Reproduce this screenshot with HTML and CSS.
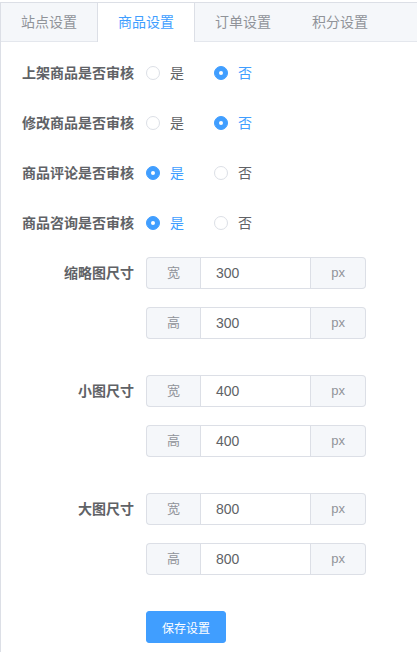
FILE: index.html
```html
<!DOCTYPE html>
<html lang="zh-CN">
<head>
<meta charset="utf-8">
<title>商品设置</title>
<link rel="stylesheet" href="styles.css">
</head>
<body>
<div class="card">
  <div class="tabs-header">
    <div class="tabs-nav">
      <div class="tab">站点设置</div>
      <div class="tab active">商品设置</div>
      <div class="tab">订单设置</div>
      <div class="tab">积分设置</div>
    </div>
  </div>
  <div class="tabs-content">
    <div class="form-item">
      <div class="label">上架商品是否审核</div>
      <div class="control">
        <span class="radio"><span class="dot"></span><span class="rtext">是</span></span>
        <span class="radio checked"><span class="dot"></span><span class="rtext">否</span></span>
      </div>
    </div>
    <div class="form-item">
      <div class="label">修改商品是否审核</div>
      <div class="control">
        <span class="radio"><span class="dot"></span><span class="rtext">是</span></span>
        <span class="radio checked"><span class="dot"></span><span class="rtext">否</span></span>
      </div>
    </div>
    <div class="form-item">
      <div class="label">商品评论是否审核</div>
      <div class="control">
        <span class="radio checked"><span class="dot"></span><span class="rtext">是</span></span>
        <span class="radio"><span class="dot"></span><span class="rtext">否</span></span>
      </div>
    </div>
    <div class="form-item">
      <div class="label">商品咨询是否审核</div>
      <div class="control">
        <span class="radio checked"><span class="dot"></span><span class="rtext">是</span></span>
        <span class="radio"><span class="dot"></span><span class="rtext">否</span></span>
      </div>
    </div>

    <div class="form-item">
      <div class="label">缩略图尺寸</div>
      <div class="control column">
        <div class="input-group"><span class="prepend">宽</span><span class="input">300</span><span class="append">px</span></div>
        <div class="input-group"><span class="prepend">高</span><span class="input">300</span><span class="append">px</span></div>
      </div>
    </div>
    <div class="form-item">
      <div class="label">小图尺寸</div>
      <div class="control column">
        <div class="input-group"><span class="prepend">宽</span><span class="input">400</span><span class="append">px</span></div>
        <div class="input-group"><span class="prepend">高</span><span class="input">400</span><span class="append">px</span></div>
      </div>
    </div>
    <div class="form-item">
      <div class="label">大图尺寸</div>
      <div class="control column">
        <div class="input-group"><span class="prepend">宽</span><span class="input">800</span><span class="append">px</span></div>
        <div class="input-group"><span class="prepend">高</span><span class="input">800</span><span class="append">px</span></div>
      </div>
    </div>
    <div class="form-item last">
      <div class="label"></div>
      <div class="control">
        <button class="btn" type="button">保存设置</button>
      </div>
    </div>
  </div>
</div>
</body>
</html>
```

FILE: styles.css
```css
html, body {
  margin: 0;
  padding: 0;
  background: #fff;
  overflow: hidden;
}
body {
  font-family: "Liberation Sans", "Noto Sans CJK SC", sans-serif;
  color: #606266;
  height: 652px;
}
.card {
  margin-top: 2px;
  width: 100%;
  height: 650px;
  box-sizing: border-box;
  border-top: 1px solid #dcdfe6;
  border-left: 1px solid #dcdfe6;
  background: #fff;
  overflow: hidden;
}
.tabs-header {
  height: 38px;
  background: #f5f7fa;
  border-bottom: 1px solid #e4e7ed;
}
.tabs-nav {
  display: flex;
  margin-bottom: -1px;
}
.tab {
  box-sizing: border-box;
  height: 39px;
  line-height: 39px;
  padding: 0 20px;
  margin-left: -1px;
  border-left: 1px solid transparent;
  border-right: 1px solid transparent;
  font-size: 14px;
  color: #909399;
}
.tab.active {
  background: #fff;
  color: #409eff;
  border-left-color: #dcdfe6;
  border-right-color: #dcdfe6;
}
.tabs-content {
  padding: 15px;
}
.form-item {
  display: flex;
  margin-bottom: 18px;
}
.form-item.last {
  margin-bottom: 0;
}
.label {
  width: 130px;
  flex: none;
  box-sizing: border-box;
  padding-right: 12px;
  text-align: right;
  line-height: 32px;
  font-size: 14px;
  font-weight: bold;
  color: #606266;
}
.control {
  display: flex;
  align-items: center;
  line-height: 32px;
  min-height: 32px;
}
.control.column {
  flex-direction: column;
  align-items: flex-start;
}
.radio {
  display: inline-flex;
  align-items: center;
  margin-right: 30px;
  font-size: 14px;
  color: #606266;
}
.dot {
  box-sizing: border-box;
  width: 14px;
  height: 14px;
  border-radius: 50%;
  border: 1px solid #dcdfe6;
  background: #fff;
  position: relative;
}
.radio.checked .dot {
  border-color: #409eff;
  background: #409eff;
}
.radio.checked .dot::after {
  content: "";
  position: absolute;
  width: 4px;
  height: 4px;
  border-radius: 50%;
  background: #fff;
  left: 50%;
  top: 50%;
  transform: translate(-50%, -50%);
}
.rtext {
  padding-left: 10px;
}
.radio.checked .rtext {
  color: #409eff;
}
.input-group {
  display: flex;
  width: 220px;
  height: 32px;
  margin-bottom: 18px;
  font-size: 13px;
}
.prepend, .append {
  box-sizing: border-box;
  padding: 0 20px;
  background: #f5f7fa;
  color: #909399;
  border: 1px solid #dcdfe6;
  line-height: 30px;
  flex: none;
}
.prepend {
  border-right: 0;
  border-radius: 4px 0 0 4px;
}
.append {
  border-left: 0;
  border-radius: 0 4px 4px 0;
}
.input {
  box-sizing: border-box;
  flex: 1;
  border: 1px solid #dcdfe6;
  padding: 0 15px;
  line-height: 30px;
  font-size: 14px;
  color: #606266;
}
.btn {
  box-sizing: border-box;
  width: 80px;
  height: 32px;
  padding: 0 15px;
  border: 1px solid #409eff;
  background: #409eff;
  color: #fff;
  border-radius: 3px;
  font-size: 12px;
  font-family: "Liberation Sans", "Noto Sans CJK SC", sans-serif;
}
```
